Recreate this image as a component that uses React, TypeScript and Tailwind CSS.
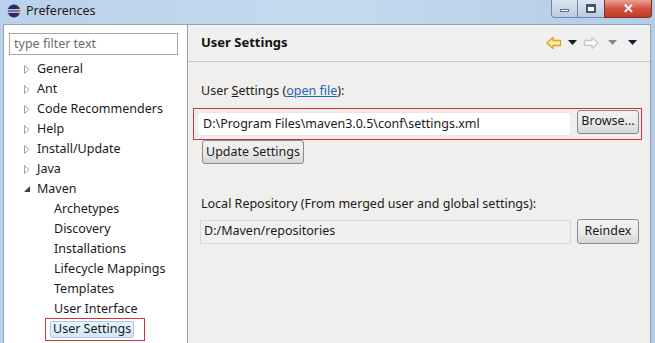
import React from "react";

const font = { fontFamily: '"Noto Sans", "Open Sans", sans-serif' };

const Arrow = ({ open }: { open?: boolean }) =>
  open ? (
    <svg width="8" height="8" viewBox="0 0 8 8" className="shrink-0">
      <path d="M7 1 L7 7 L1 7 Z" fill="#404040" />
    </svg>
  ) : (
    <svg width="8" height="9" viewBox="0 0 8 9" className="shrink-0">
      <path d="M1.5 0.5 L6 4.5 L1.5 8.5 Z" fill="none" stroke="#a0a0a0" />
    </svg>
  );

const topItems = ["General", "Ant", "Code Recommenders", "Help", "Install/Update", "Java"];
const mavenItems = ["Archetypes", "Discovery", "Installations", "Lifecycle Mappings", "Templates", "User Interface"];

function Btn({ children, className = "" }: { children: React.ReactNode; className?: string }) {
  return (
    <div
      className={`flex items-center justify-center rounded-[3px] border border-[#8a8a8a] bg-gradient-to-b from-[#f2f2f2] via-[#ebebeb] to-[#d6d6d6] text-[12.5px] text-[#1a1a1a] ${className}`}
    >
      {children}
    </div>
  );
}

function Tri({ color }: { color: string }) {
  return (
    <svg width="9" height="6" viewBox="0 0 9 6">
      <path d="M0 0 L9 0 L4.5 5 Z" fill={color} />
    </svg>
  );
}

export default function App() {
  return (
    <div
      className="w-[655px] h-[343px] overflow-hidden flex flex-col bg-gradient-to-r from-[#b9d1ea] via-[#c6daef] to-[#b4cce6]"
      style={font}
    >
      {/* title bar */}
      <div className="h-[24px] flex items-start shrink-0">
        <div className="flex items-center h-[22px] pl-[7px] gap-[5px]">
          <svg width="14" height="14" viewBox="0 0 14 14">
            <circle cx="7" cy="7" r="6.5" fill="#2c2a6a" />
            <rect x="0" y="5.2" width="14" height="1.2" fill="#e8e4f0" />
            <rect x="0" y="7.6" width="14" height="1.2" fill="#e8e4f0" />
            <path d="M9 1.2 A6 6 0 0 1 9 12.8 A5 6 0 0 0 9 1.2 Z" fill="#f4a43a" />
          </svg>
          <span className="text-[12.5px] text-[#1c1c1c]">Preferences</span>
        </div>
        <div className="ml-auto mr-[3px] flex h-[18px]">
          <div className="w-[27px] rounded-bl-[4px] border border-[#6f86a6] border-t-0 bg-gradient-to-b from-[#dbe6f3] to-[#b9cbe2] flex items-center justify-center">
            <div className="w-[9px] h-[3px] bg-white border border-[#5b6f8a] mt-[4px]" />
          </div>
          <div className="w-[26px] border-b border-[#6f86a6] bg-gradient-to-b from-[#dbe6f3] to-[#b9cbe2] flex items-center justify-center">
            <div className="w-[10px] h-[9px] border-2 border-t-[3px] border-[#44556e] bg-white" />
          </div>
          <div className="w-[48px] rounded-br-[4px] border border-[#8a2e22] border-t-0 bg-gradient-to-b from-[#e8a093] via-[#d2533e] to-[#c23a24] flex items-center justify-center text-white text-[13px] font-bold leading-none">
            ✕
          </div>
        </div>
      </div>

      {/* client area */}
      <div className="flex-1 flex ml-[3px] mr-[4px] border border-[#8ea3bd] border-b-0 bg-[#f0f0f0]">
        {/* left tree */}
        <div className="w-[184px] shrink-0 bg-white border-r border-[#a0a0a0] flex flex-col pt-[8px]">
          <div className="ml-[5px] w-[169px] h-[22px] border border-[#a7a7a7] flex items-center pl-[4px] text-[12.5px] text-[#6d6d6d]">
            type filter text
          </div>
          <div className="mt-[4px] flex flex-col text-[12.5px] text-[#1a1a1a]">
            {topItems.map((t) => (
              <div key={t} className="h-[20px] flex items-center pl-[19px] gap-[6px]">
                <Arrow />
                <span>{t}</span>
              </div>
            ))}
            <div className="h-[20px] flex items-center pl-[19px] gap-[6px]">
              <Arrow open />
              <span>Maven</span>
            </div>
            {mavenItems.map((t) => (
              <div key={t} className="h-[20px] flex items-center pl-[50px]">
                <span>{t}</span>
              </div>
            ))}
            <div className="h-[20px] flex items-center pl-[41px]">
              <div className="border border-[#d2323c] pl-[4px] pr-[10px] py-[2px]">
                <div className="border border-[#a8c8e8] bg-gradient-to-b from-[#eaf4fd] to-[#d3e7f9] rounded-[2px] px-[2px] h-[17px] flex items-center">
                  User Settings
                </div>
              </div>
            </div>
          </div>
        </div>

        {/* right page */}
        <div className="flex-1 flex flex-col">
          <div className="h-[37px] shrink-0 border-b border-[#c8c8c8] bg-[#f0f0f0] flex items-center pl-[13px] pr-[13px]">
            <span className="text-[13px] font-bold text-[#111]">User Settings</span>
            <div className="ml-auto flex items-center">
              <svg width="16" height="14" viewBox="0 0 16 14">
                <path
                  d="M1 7 L7 1.5 L7 4.5 L14.5 4.5 L14.5 9.5 L7 9.5 L7 12.5 Z"
                  fill="#fde9a8"
                  stroke="#d9a51e"
                  strokeWidth="1.3"
                  strokeLinejoin="round"
                />
              </svg>
              <span className="ml-[6px]">
                <Tri color="#1b1b1b" />
              </span>
              <svg width="16" height="14" viewBox="0 0 16 14" className="ml-[6px]">
                <path
                  d="M15 7 L9 1.5 L9 4.5 L1.5 4.5 L1.5 9.5 L9 9.5 L9 12.5 Z"
                  fill="#fafafa"
                  stroke="#c8c8c8"
                  strokeWidth="1.3"
                  strokeLinejoin="round"
                />
              </svg>
              <span className="ml-[9px]">
                <Tri color="#8a8a8a" />
              </span>
              <span className="ml-[11px]">
                <Tri color="#1a1a3a" />
              </span>
            </div>
          </div>

          <div className="flex-1 bg-[#f1efed] flex flex-col pl-[5px] pr-[8px] text-[12.5px] text-[#1a1a1a]">
            <div className="mt-[20px] pl-[8px] h-[18px] flex items-center">
              User&nbsp;<span className="underline">S</span>ettings (
              <span className="text-[#1f66b4] underline">open file</span>):
            </div>
            <div className="mt-[8px] h-[32px] border border-[#d2323c] flex items-center pl-[3px] pr-[2px] gap-[6px]">
              <div className="flex-1 h-[24px] bg-white border border-[#e3e9ef] flex items-center pl-[5px]">
                D:\Program Files\maven3.0.5\conf\settings.xml
              </div>
              <Btn className="w-[62px] h-[24px] -mt-[5px]">Browse...</Btn>
            </div>
            <div className="pl-[9px]">
              <Btn className="w-[102px] h-[24px]">Update Settings</Btn>
            </div>
            <div className="mt-[31px] pl-[8px] h-[18px] flex items-center">
              Local Repository (From merged user and global settings):
            </div>
            <div className="mt-[6px] flex items-center pl-[7px] pr-[3px] gap-[6px]">
              <div className="flex-1 h-[24px] bg-[#f0f0f0] border border-[#dadada] flex items-center pl-[3px]">
                D:/Maven/repositories
              </div>
              <Btn className="w-[62px] h-[25px]">Reindex</Btn>
            </div>
          </div>
        </div>
      </div>
    </div>
  );
}
